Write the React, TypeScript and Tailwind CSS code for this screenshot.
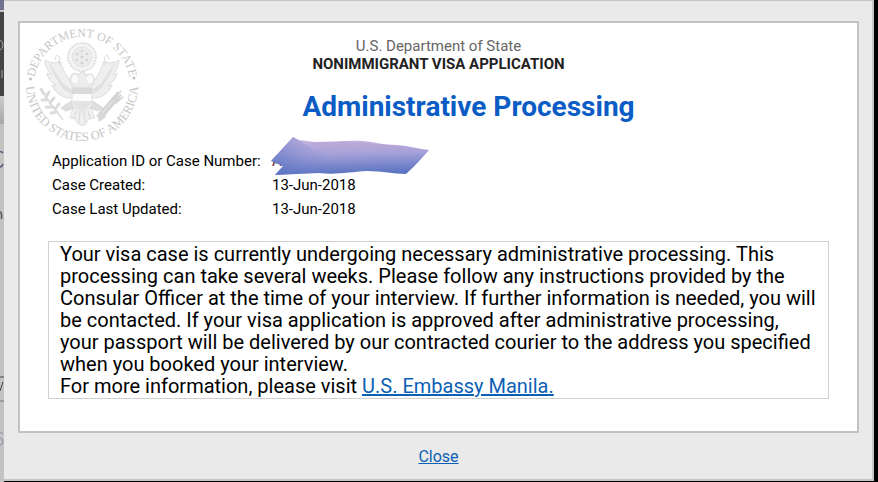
const details = [
  { id: 1, label: 'Application ID or Case Number:', value: 'A', hidden: true },
  { id: 2, label: 'Case Created:', value: '13-Jun-2018', hidden: false },
  { id: 3, label: 'Case Last Updated:', value: '13-Jun-2018', hidden: false },
];

const feathers = [0, 1, 2, 3, 4, 5];

const Wing = () => (
  <g>
    <path
      d="M51 60 C45 54 40 46 36 34 C31 37 26 36 21 33 C21 39 24 44 27 47 C25 47 24 47 23 46 C24 52 28 56 32 58 C31 59 29 59 28 58 C31 66 38 70 44 71 L50 71 Z"
      fill="#efefef"
      stroke="#dcdcdc"
      strokeWidth="1"
    />
    {feathers.map((i) => (
      <path
        key={i}
        d={`M${26 + i * 2} ${37 + i * 3} Q${31 + i} ${54 + i * 2} ${46 + i} ${62 + i}`}
        fill="none"
        stroke="#dfdfdf"
        strokeWidth="1"
      />
    ))}
    <path d="M32 33 C30 31 33 29 33 28 L36 31 C35 34 34 35 36 38" fill="none" stroke="#dadada" />
  </g>
);

const Seal = () => (
  <svg viewBox="0 0 116 118" className="h-[118px] w-[116px] overflow-visible" role="img" aria-label="Department of State seal">
    <defs>
      <path id="ring-top" d="M10 58 A48 48 0 0 1 106 58" />
      <path id="ring-bottom" d="M2 58 A56 56 0 0 0 114 58" />
    </defs>
    <g fill="#c6c6c6" fontFamily="Liberation Serif, serif" textAnchor="middle">
      <text fontSize="12">
        <textPath href="#ring-top" startOffset="50%">DEPARTMENT OF STATE</textPath>
      </text>
      <text fontSize="12.5">
        <textPath href="#ring-bottom" startOffset="50%">UNITED STATES OF AMERICA</textPath>
      </text>
    </g>
    <circle cx="6.5" cy="52" r="1.6" fill="#c4c4c4" />
    <circle cx="110" cy="51" r="1.6" fill="#c4c4c4" />

    {/* glory of stars */}
    <circle cx="58" cy="30" r="14" fill="#f5f5f5" stroke="#dfdfdf" strokeWidth="2" strokeDasharray="2 1" />
    <circle cx="58" cy="30" r="10" fill="#ececec" stroke="#e2e2e2" />
    <g fill="#d2d2d2">
      <circle cx="58" cy="30" r="1.5" />
      <circle cx="58" cy="24" r="1.3" />
      <circle cx="58" cy="36" r="1.3" />
      <circle cx="53" cy="27" r="1.3" />
      <circle cx="63" cy="27" r="1.3" />
      <circle cx="53" cy="33" r="1.3" />
      <circle cx="63" cy="33" r="1.3" />
    </g>

    <Wing />
    <g transform="translate(116 0) scale(-1 1)">
      <Wing />
    </g>

    {/* head, ribbon and breast */}
    <path d="M47 57 C43 48 50 44 55 48 L57 45 C60 44 62 46 61 49 C67 44 73 49 69 57 L66 61 L50 61 Z" fill="#ececec" stroke="#dadada" />
    <ellipse cx="51" cy="52" rx="3" ry="4" fill="#fafafa" />
    <ellipse cx="66" cy="52" rx="3" ry="4" fill="#fafafa" />

    {/* tail and legs */}
    <path d="M49 80 L46 91 L51 92 L54 97 L58 99 L62 97 L65 92 L71 91 L67 80 Z" fill="#efefef" stroke="#dedede" strokeDasharray="3 1" />
    <path d="M52 84 L50 92 M56 84 L55 96 M60 84 L61 96 M64 84 L66 92" stroke="#dadada" />
    <path d="M49 73 L37 81 L42 84 L50 81 Z M67 73 L79 81 L74 84 L66 81 Z" fill="#dfdfdf" stroke="#d8d8d8" />

    {/* shield */}
    <path d="M48 61 H68 V75 C68 80 63 83 58 85 C53 83 48 80 48 75 Z" fill="#fcfcfc" stroke="#dedede" />
    <path d="M48 61 H68 V67 H48 Z" fill="#d9d9d9" />
    <path d="M49 74 H67 V76 C66 80 62 82 58 84 C54 82 50 80 49 76 Z" fill="#e3e3e3" />

    {/* olive branch */}
    <path d="M39 93 C33 84 25 76 19 64" fill="none" stroke="#d2d2d2" strokeWidth="1.2" />
    <path
      d="M20 67 L17 62 M22 70 L25 65 M23 73 L18 73 M26 76 L30 71 M29 80 L22 80 M31 82 L35 77 M33 85 L27 86"
      stroke="#dcdcdc"
      strokeWidth="3"
      strokeLinecap="round"
    />

    {/* arrows */}
    <path d="M76 90 L95 68" stroke="#dedede" strokeWidth="6" />
    <path
      d="M75 93 L97 68 M73 89 L94 65 M89 73 L97 64 M92 76 L99 70"
      stroke="#d0d0d0"
      strokeWidth="1.2"
      strokeLinecap="round"
    />
    <path d="M73 87 L80 86 L82 90 L75 95 Z" fill="#d8d8d8" />
  </svg>
);

const Scribble = () => (
  <svg viewBox="0 0 160 40" className="absolute -left-px -top-3 h-10 w-40" aria-hidden="true">
    <defs>
      <linearGradient id="ink" x1="0.45" y1="0" x2="0.55" y2="1">
        <stop offset="0.1" stopColor="#c4b2df" />
        <stop offset="0.45" stopColor="#a4a0d8" />
        <stop offset="1" stopColor="#5570c0" />
      </linearGradient>
      <linearGradient id="ink-left" x1="0" y1="0.6" x2="1" y2="0.4">
        <stop offset="0" stopColor="#5470c0" />
        <stop offset="1" stopColor="#8d92d4" stopOpacity="0" />
      </linearGradient>
    </defs>
    <path
      d="M22 0 L28 3 L44 5 C60 5 76 3 92 4 C104 5 112 8 126 8 C138 9 148 12 158 13 C151 21 144 29 135 37 C122 37 112 34 96 34 C78 35 66 38 48 36 L4 38 L12 29 L0 24 Z"
      fill="url(#ink)"
    />
    <path d="M22 0 L34 7 L44 13 L66 12 L40 36 L4 38 L12 29 L0 24 Z" fill="url(#ink-left)" opacity="0.6" />
    <path d="M38 6 C70 4 100 5 155 13 C130 13 110 10 78 11 C62 12 52 12 46 12 Z" fill="#b6a4d3" opacity="0.6" />
  </svg>
);

// sliver of the page behind the dialog
const Backdrop = () => (
  <div className="flex w-1 shrink-0 flex-col bg-[#c3c3c3]" aria-hidden="true">
    <div className="h-2.5 bg-[#70738f]" />
    <div className="h-0.5 bg-[#c5c5cc]" />
    <div className="h-[84px] bg-[#444444]">
      <svg viewBox="0 0 4 84" className="h-[84px] w-1" fill="none" stroke="#a5a5a5">
        <path d="M0 28 Q3 29 3 33 Q3 37 0 38 M2 58 V66" />
      </svg>
    </div>
    <div className="h-7 bg-gradient-to-b from-[#cccccc] to-[#a8a8a8]" />
    <svg viewBox="0 0 4 340" className="h-[340px] w-1" fill="none">
      <path d="M3 29 Q1 27 0 28 M3 40 Q2 43 0 43" stroke="#555d80" strokeWidth="1.5" />
      <path d="M0 88 Q2 88 1.500 95" stroke="#555555" strokeWidth="1.5" />
      <path d="M0 253 H4 M0 267 L3 258" stroke="#444444" />
      <path d="M0 277 H4" stroke="#777777" />
      <path d="M0 309 H3 M0 314 Q3 314 3 318 Q3 321 0 321" stroke="#8a90ab" />
    </svg>
  </div>
);

export default function App() {
  return (
    <div className="flex min-h-screen bg-black font-[Roboto,'Liberation_Sans',sans-serif] text-black">
      <Backdrop />
      <div className="mr-1 mb-px flex-1 border-t border-r-2 border-b-2 border-[#c6c6c8] bg-[#eaeaea] pt-5 pr-[13px] pl-3.5">
        <main className="border-2 border-[#c2c2c2] bg-white px-7 pb-8">
          <header className="flex">
            <div className="-ml-6 mt-1 w-[116px] shrink-0">
              <Seal />
            </div>
            <div className="mr-[92px] flex-1 pt-3.5 text-center">
              <p className="text-[15px] leading-[18px] text-[#666666]">U.S. Department of State</p>
              <p className="text-[15px] leading-[18px] font-bold text-[#222222]">NONIMMIGRANT VISA APPLICATION</p>
              <h1 className="mt-4 pl-15 text-[28px] leading-9 font-bold text-[#0b5cc4]">Administrative Processing</h1>
            </div>
          </header>

          <dl className="mt-1 ml-1 text-[15px] leading-6">
            {details.map((item) => (
              <div key={item.id} className="flex">
                <dt className="w-[220px] shrink-0">{item.label}</dt>
                <dd className={item.hidden ? 'relative text-[#6b1730]' : ''}>
                  {item.value}
                  {item.hidden && <Scribble />}
                </dd>
              </div>
            ))}
          </dl>

          <section className="mt-5 border border-[#d0d0d0] px-[11px] py-px text-[20px] leading-[22px]">
            <p>
              Your visa case is currently undergoing necessary administrative processing. This processing can take
              several weeks. Please follow any instructions provided by the Consular Officer at the time of your
              interview. If further information is needed, you will be contacted. If your visa application is approved
              after administrative processing, your passport will be delivered by our contracted courier to the address
              you specified when you booked your interview.
            </p>
            <p>
              For more information, please visit{' '}
              <a href="#embassy" className="text-[#0b5fb5] underline">
                U.S. Embassy Manila.
              </a>
            </p>
          </section>
        </main>
        <div className="pt-3 pb-2 text-center">
          <a href="#close" className="text-[16px] leading-6 text-[#0b5fb5] underline">
            Close
          </a>
        </div>
      </div>
    </div>
  );
}
